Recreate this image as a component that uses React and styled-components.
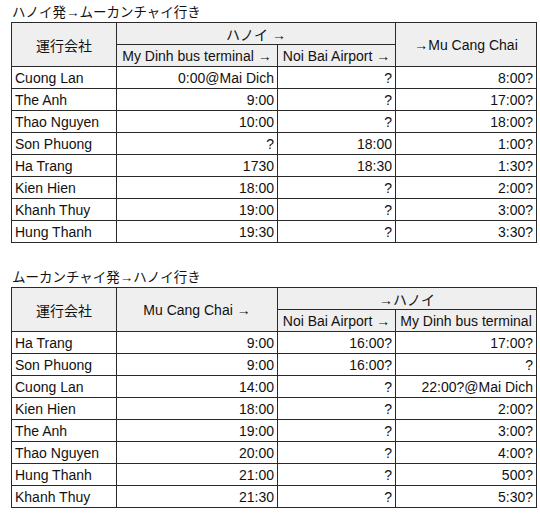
import React from 'react';
import styled, { createGlobalStyle } from 'styled-components';

const GlobalStyle = createGlobalStyle`
  body {
    margin: 0;
    background: #fff;
    font-family: "Liberation Sans", Arial, "Noto Sans CJK JP", sans-serif;
    color: #111;
  }
`;

const Page = styled.div`
  padding: 4px 4px 0 11px;
`;

const Section = styled.section`
  & + & {
    margin-top: 26px;
  }
`;

const Title = styled.div`
  font-size: 13.5px;
  line-height: 18px;
  padding-left: 1px;
  font-family: "Liberation Sans", "Noto Sans CJK JP", sans-serif;
`;

const Table = styled.table`
  border-collapse: collapse;
  table-layout: fixed;
  width: 525px;
  font-size: 14px;
  border: 1px solid #2a2a2a;
`;

const Th = styled.th`
  background: #efefef;
  font-weight: normal;
  border: 1px solid #2a2a2a;
  height: 21px;
  padding: 0 3px;
  text-align: ${p => (p.$right ? 'right' : 'center')};
  white-space: nowrap;
  overflow: hidden;
`;

const Td = styled.td`
  border: 1px solid #2a2a2a;
  height: 21px;
  padding: 0 3px;
  text-align: ${p => (p.$right ? 'right' : 'left')};
  white-space: nowrap;
`;

const outbound = [
  ['Cuong Lan', '0:00@Mai Dich', '?', '8:00?'],
  ['The Anh', '9:00', '?', '17:00?'],
  ['Thao Nguyen', '10:00', '?', '18:00?'],
  ['Son Phuong', '?', '18:00', '1:00?'],
  ['Ha Trang', '1730', '18:30', '1:30?'],
  ['Kien Hien', '18:00', '?', '2:00?'],
  ['Khanh Thuy', '19:00', '?', '3:00?'],
  ['Hung Thanh', '19:30', '?', '3:30?'],
];

const inbound = [
  ['Ha Trang', '9:00', '16:00?', '17:00?'],
  ['Son Phuong', '9:00', '16:00?', '?'],
  ['Cuong Lan', '14:00', '?', '22:00?@Mai Dich'],
  ['Kien Hien', '18:00', '?', '2:00?'],
  ['The Anh', '19:00', '?', '3:00?'],
  ['Thao Nguyen', '20:00', '?', '4:00?'],
  ['Hung Thanh', '21:00', '?', '500?'],
  ['Khanh Thuy', '21:30', '?', '5:30?'],
];

const Cols = () => (
  <colgroup>
    <col style={{ width: 105 }} />
    <col style={{ width: 161 }} />
    <col style={{ width: 118 }} />
    <col style={{ width: 141 }} />
  </colgroup>
);

const Body = ({ rows }) => (
  <tbody>
    {rows.map(r => (
      <tr key={r[0]}>
        <Td>{r[0]}</Td>
        <Td $right>{r[1]}</Td>
        <Td $right>{r[2]}</Td>
        <Td $right>{r[3]}</Td>
      </tr>
    ))}
  </tbody>
);

export default function App() {
  return (
    <Page>
      <GlobalStyle />
      <Section>
        <Title>ハノイ発→ムーカンチャイ行き</Title>
        <Table>
          <Cols />
          <thead>
            <tr>
              <Th rowSpan={2}>運行会社</Th>
              <Th colSpan={2}>ハノイ →</Th>
              <Th rowSpan={2}>→Mu Cang Chai</Th>
            </tr>
            <tr>
              <Th>My Dinh bus terminal →</Th>
              <Th>Noi Bai Airport →</Th>
            </tr>
          </thead>
          <Body rows={outbound} />
        </Table>
      </Section>
      <Section>
        <Title>ムーカンチャイ発→ハノイ行き</Title>
        <Table>
          <Cols />
          <thead>
            <tr>
              <Th rowSpan={2}>運行会社</Th>
              <Th rowSpan={2}>Mu Cang Chai →</Th>
              <Th colSpan={2}>→ハノイ</Th>
            </tr>
            <tr>
              <Th>Noi Bai Airport →</Th>
              <Th>My Dinh bus terminal</Th>
            </tr>
          </thead>
          <Body rows={inbound} />
        </Table>
      </Section>
    </Page>
  );
}
